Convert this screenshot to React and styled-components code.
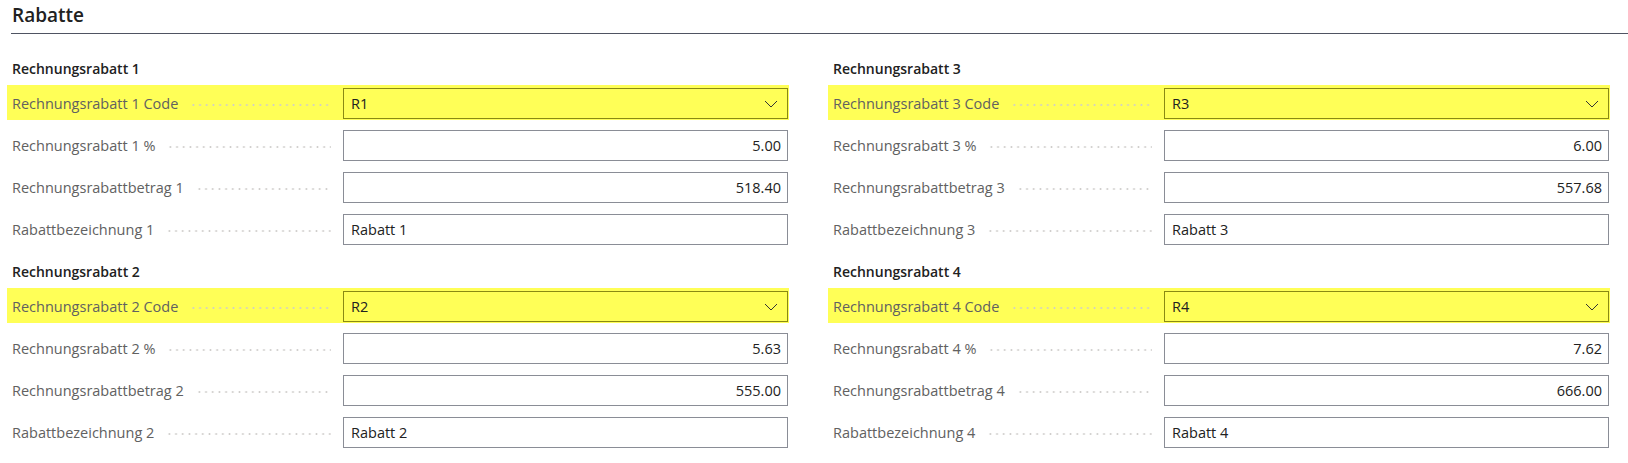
import React from "react";
import styled, { createGlobalStyle } from "styled-components";

const GlobalStyle = createGlobalStyle`
  body {
    margin: 0;
    background: #ffffff;
    font-family: "Segoe UI", "Open Sans", "Noto Sans", sans-serif;
  }
  * { box-sizing: border-box; }
`;

const Page = styled.div`
  width: 1628px;
  height: 463px;
  overflow: hidden;
  background: #fff;
`;

const Header = styled.div`
  margin-left: 11px;
  padding: 2px 0 0 1px;
  height: 34px;
  border-bottom: 1px solid #4f5462;
`;

const Title = styled.h1`
  margin: 0;
  font-size: 19px;
  line-height: 26px;
  font-weight: 600;
  color: #212121;
`;

const Columns = styled.div`
  display: grid;
  grid-template-columns: 776px 776px;
  column-gap: 45px;
  padding: 0 19px 0 12px;
`;

const Column = styled.div`
  display: flex;
  flex-direction: column;
`;

const Group = styled.section`
  margin-top: ${(p) => (p.$first ? "25px" : "17px")};
`;

const GroupTitle = styled.h2`
  margin: 0 0 9px;
  font-size: 14px;
  line-height: 20px;
  font-weight: 600;
  color: #212121;
`;

const Fields = styled.div`
  display: flex;
  flex-direction: column;
  gap: 11px;
`;

const Field = styled.div`
  display: grid;
  grid-template-columns: 331px 1fr;
  align-items: center;
  margin: -3px -1px -1px -5px;
  padding: 3px 1px 1px 5px;
  background: ${(p) => (p.$highlight ? "#ffff57" : "transparent")};
`;

const LabelCell = styled.div`
  display: flex;
  align-items: center;
  min-width: 0;
`;

const Label = styled.label`
  font-size: 14.5px;
  line-height: 20px;
  color: #616161;
  white-space: nowrap;
`;

const Leader = styled.span`
  flex: 1;
  height: 4px;
  margin: 2px 12px 0 12px;
  background-image: radial-gradient(circle, #cfcdcb 0.8px, transparent 1.2px);
  background-size: 6.7px 4px;
  background-repeat: repeat-x;
  background-position: left center;
`;

const Input = styled.div`
  position: relative;
  height: 31px;
  display: flex;
  align-items: center;
  justify-content: ${(p) => (p.$numeric ? "flex-end" : "flex-start")};
  padding: 0 ${(p) => (p.$select ? "34px" : "6px")} 0 7px;
  border: 1px solid ${(p) => (p.$highlight ? "#8a8a12" : "#8a8d96")};
  background: ${(p) => (p.$highlight ? "#ffff57" : "#fff")};
  font-size: 14.5px;
  color: #212121;
`;

const Chevron = styled.svg`
  position: absolute;
  right: 9px;
  top: 50%;
  margin-top: -4px;
  width: 14px;
  height: 8px;
`;

const groups = [
  [
    { n: 1, code: "R1", pct: "5.00", amt: "518.40" },
    { n: 2, code: "R2", pct: "5.63", amt: "555.00" },
  ],
  [
    { n: 3, code: "R3", pct: "6.00", amt: "557.68" },
    { n: 4, code: "R4", pct: "7.62", amt: "666.00" },
  ],
];

const Row = ({ label, value, highlight, numeric, select }) => (
  <Field $highlight={highlight}>
    <LabelCell>
      <Label>{label}</Label>
      <Leader />
    </LabelCell>
    <Input $highlight={highlight} $numeric={numeric} $select={select}>
      {value}
      {select && (
        <Chevron viewBox="0 0 14 8">
          <polyline points="1,1 7,7 13,1" fill="none" stroke="#333" strokeWidth="1" />
        </Chevron>
      )}
    </Input>
  </Field>
);

const App = () => {
  return (
    <>
      <GlobalStyle />
      <Page>
        <Header>
          <Title>Rabatte</Title>
        </Header>
        <Columns>
          {groups.map((col, ci) => (
            <Column key={ci}>
              {col.map((g, gi) => (
                <Group key={g.n} $first={gi === 0}>
                  <GroupTitle>Rechnungsrabatt {g.n}</GroupTitle>
                  <Fields>
                    <Row label={`Rechnungsrabatt ${g.n} Code`} value={g.code} highlight select />
                    <Row label={`Rechnungsrabatt ${g.n} %`} value={g.pct} numeric />
                    <Row label={`Rechnungsrabattbetrag ${g.n}`} value={g.amt} numeric />
                    <Row label={`Rabattbezeichnung ${g.n}`} value={`Rabatt ${g.n}`} />
                  </Fields>
                </Group>
              ))}
            </Column>
          ))}
        </Columns>
      </Page>
    </>
  );
};

export default App;
